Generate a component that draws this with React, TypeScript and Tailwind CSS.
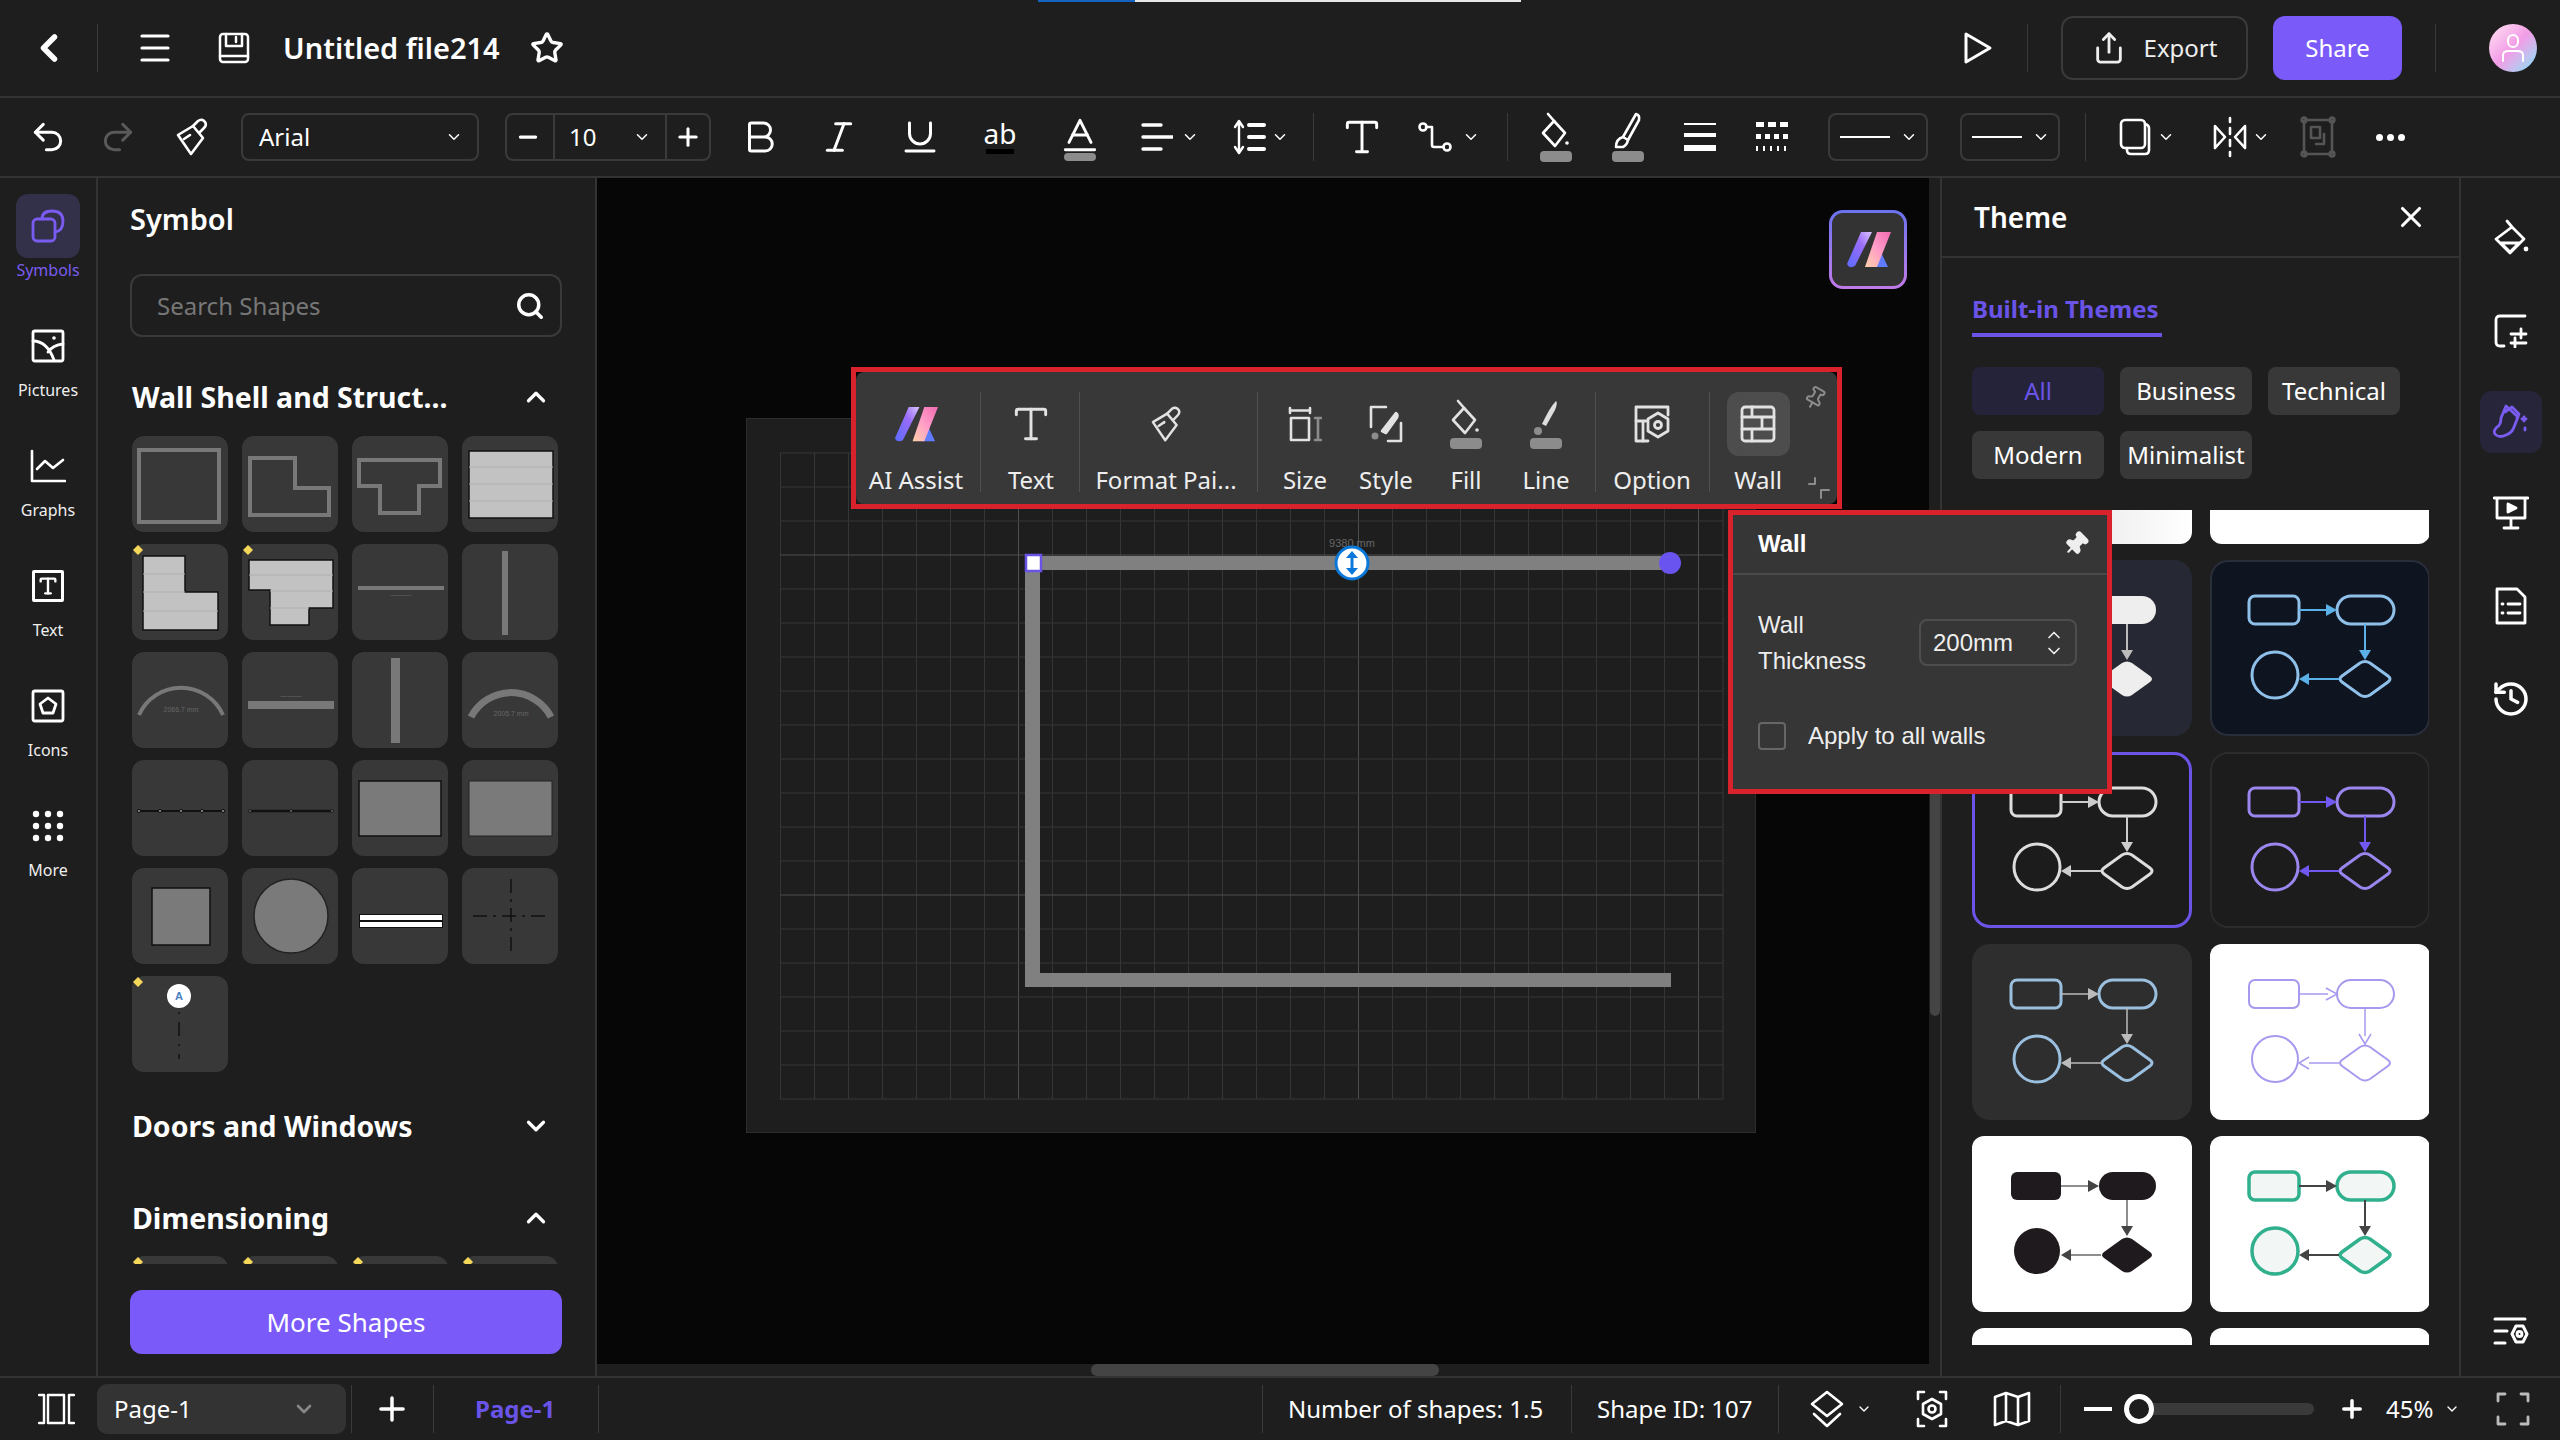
import React from 'react';
import {
  Baseline,
  Bold,
  ChevronDown,
  ChevronLeft,
  ChevronUp,
  History,
  Italic,
  Minus,
  Pin,
  Plus,
  Redo2,
  Search,
  Share,
  Star,
  Type,
  Underline,
  Undo2,
  X,
} from 'lucide-react';

type SvgProps = { w: number; h: number; sw?: number; children: React.ReactNode };

const Svg = ({ w, h, sw = 2.5, children }: SvgProps) => (
  <svg
    width={w}
    height={h}
    viewBox={`0 0 ${w} ${h}`}
    fill="none"
    stroke="currentColor"
    strokeWidth={sw}
    strokeLinecap="round"
    strokeLinejoin="round"
  >
    {children}
  </svg>
);

const Chev = ({ size = 18 }: { size?: number }) => <ChevronDown size={size} strokeWidth={2} />;

const Divider = ({ className = '' }: { className?: string }) => (
  <div className={`w-[1px] h-12 bg-[#3a3a3a] shrink-0 ${className}`} />
);

const AiLogo = ({ w }: { w: number }) => (
  <svg width={w} height={(w * 37) / 45} viewBox="0 0 45 37">
    <defs>
      <linearGradient id="aiA" x1="0" y1="1" x2="1" y2="0">
        <stop offset="0" stopColor="#5a6cff" />
        <stop offset="0.6" stopColor="#9a6cf8" />
        <stop offset="1" stopColor="#d9c4ff" />
      </linearGradient>
      <linearGradient id="aiB" x1="0" y1="1" x2="1" y2="0">
        <stop offset="0" stopColor="#ffd2a8" />
        <stop offset="0.5" stopColor="#ff9cc8" />
        <stop offset="1" stopColor="#f06ab0" />
      </linearGradient>
    </defs>
    <path d="M15 1 H26 L9 35 Q3 38 1 33 Z" fill="url(#aiA)" />
    <path d="M33 17 L42 36 H28 Z" fill="#5f7cff" />
    <path d="M31 1 H45 L31 36 H19 Z" fill="url(#aiB)" />
  </svg>
);

const BrushIcon = ({ s = 1 }: { s?: number }) => (
  <svg width={32 * s} height={38 * s} viewBox="0 0 32 38" fill="none" stroke="currentColor" strokeWidth={2.6} strokeLinejoin="round" strokeLinecap="round">
    <path d="M2 17 L17 8 L27 20 L15 36 Z" />
    <path d="M17 8 L22 3 Q26 0 29 4 Q31 7 28 10 L24 14" />
    <path d="M8 21 L14 17" />
  </svg>
);

const FillIcon = () => (
  <svg width={36} height={50} viewBox="0 0 36 50" fill="none" stroke="currentColor" strokeWidth={2.6} strokeLinejoin="round" strokeLinecap="round">
    <path d="M16 9 L27 21 L17 34 L5 21 Z" />
    <path d="M10 2 L17 10" />
    <circle cx="29" cy="31" r="1.8" fill="currentColor" stroke="none" />
    <rect x="2" y="39" width="32" height="11" rx="4" fill="#8c8c8c" stroke="none" />
  </svg>
);

const PenIcon = () => (
  <svg width={36} height={50} viewBox="0 0 36 50" fill="none" stroke="currentColor" strokeWidth={2.6} strokeLinejoin="round" strokeLinecap="round">
    <path d="M26 2 Q30 3 29 8 L18 28 L13 25 Z" />
    <path d="M13 25 Q6 27 6 35 H13 Q17 33 18 28" />
    <rect x="2" y="39" width="32" height="11" rx="4" fill="#8c8c8c" stroke="none" />
  </svg>
);

const TopBar = () => (
  <header className="h-[98px] shrink-0 flex items-center border-b-2 border-[#333333] relative">
    <div className="absolute left-[1038px] top-0 w-[97px] h-[2px] bg-[#1565c0]" />
    <div className="absolute left-[1135px] top-0 w-[386px] h-[2px] bg-[#e8e8e8]" />
    <div className="w-[97px] flex justify-center shrink-0">
      <ChevronLeft size={44} strokeWidth={3} />
    </div>
    <Divider />
    <div className="ml-[42px]">
      <Svg w={30} h={30} sw={3.2}>
        <path d="M2 3 H28 M2 15 H28 M2 27 H28" />
      </Svg>
    </div>
    <div className="ml-[48px]">
      <Svg w={32} h={32}>
        <rect x="2" y="2" width="28" height="28" rx="3" />
        <path d="M8 2 V14 H24 V2 M2 24 H30" />
        <path d="M18 5 V10" />
      </Svg>
    </div>
    <span className="ml-[33px] text-[29px] font-semibold w-[230px] whitespace-nowrap">Untitled file214</span>
    <Star size={34} strokeWidth={2.4} className="ml-[17px]" />
    <div className="flex-1" />
    <svg width="30" height="34" viewBox="0 0 30 34" fill="none" stroke="currentColor" strokeWidth="3" strokeLinejoin="round">
      <path d="M3 3 L27 17 L3 31 Z" />
    </svg>
    <Divider className="ml-[34px]" />
    <button className="ml-[33px] w-[187px] h-16 rounded-xl border-2 border-[#3a3a3a] flex items-center justify-center gap-[18px] text-2xl text-[#eeeeee]">
      <Share size={34} strokeWidth={2} />
      Export
    </button>
    <button className="ml-[25px] w-[129px] h-16 rounded-xl bg-[#7a5af8] text-2xl text-white">Share</button>
    <Divider className="ml-[33px]" />
    <div className="ml-[53px] mr-[23px] w-12 h-12 rounded-full bg-gradient-to-br from-[#ffe4f2] via-[#f19ce6] to-[#62e4f8] flex items-center justify-center">
      <Svg w={24} h={28} sw={2}>
        <rect x="7" y="1" width="10" height="12" rx="5" stroke="#ffffff" />
        <path d="M2 27 V21 Q2 17 8 17 H16 Q22 17 22 21 V27" stroke="#ffffff" />
      </Svg>
    </div>
  </header>
);

const ToolBar = () => (
  <div className="h-[80px] shrink-0 flex items-center border-b-2 border-[#333333]">
    <div className="ml-[24px] w-12 flex justify-center"><Undo2 size={38} strokeWidth={1.9} /></div>
    <div className="ml-[22px] w-12 flex justify-center text-[#5a5a5a]"><Redo2 size={38} strokeWidth={1.9} /></div>
    <div className="ml-[26px] w-12 flex justify-center"><BrushIcon /></div>
    <div className="ml-[25px] w-[238px] h-12 rounded-lg border-2 border-[#3a3a3a] flex items-center justify-between pl-4 pr-[14px] text-2xl">
      <span>Arial</span>
      <Chev />
    </div>
    <div className="ml-[26px] w-[206px] h-12 rounded-lg border-2 border-[#3a3a3a] flex items-center text-2xl">
      <div className="w-[46px] pr-1 flex justify-center"><Minus size={26} strokeWidth={3} /></div>
      <div className="w-[114px] h-full border-x-2 border-[#3a3a3a] flex items-center justify-between pl-[14px] pr-[14px]">
        <span>10</span>
        <Chev />
      </div>
      <div className="flex-1 flex justify-center"><Plus size={28} strokeWidth={2.6} /></div>
    </div>
    <div className="ml-[25px] w-12 flex justify-center"><Bold size={42} strokeWidth={1.7} /></div>
    <div className="ml-[31px] w-12 flex justify-center"><Italic size={40} strokeWidth={1.8} /></div>
    <div className="ml-[33px] w-12 flex justify-center"><Underline size={42} strokeWidth={1.7} /></div>
    <div className="ml-[32px] w-12 flex flex-col items-center">
      <span className="text-[28px] leading-[26px]">ab</span>
      <div className="w-7 h-[5px] bg-black mt-[3px]" />
    </div>
    <div className="ml-[32px] w-12 flex flex-col items-center">
      <Baseline size={44} strokeWidth={1.6} />
      <div className="w-8 h-[8px] rounded bg-[#8c8c8c] -mt-[4px]" />
    </div>
    <div className="ml-[29px] w-[72px] flex items-center gap-[8px] pl-[8px]">
      <Svg w={32} h={32} sw={3.4}>
        <path d="M2 4 H20 M2 16 H32 M2 28 H20" />
      </Svg>
      <Chev />
    </div>
    <div className="ml-[20px] w-[72px] flex items-center gap-[4px] pl-[8px]">
      <Svg w={34} h={38} sw={2.4}>
        <path d="M6 4 V34 M2 9 L6 3 L10 9 M2 29 L6 35 L10 29" />
        <rect x="14" y="5" width="19" height="4" rx="2" fill="currentColor" stroke="none" />
        <rect x="14" y="17" width="19" height="4" rx="2" fill="currentColor" stroke="none" />
        <rect x="14" y="29" width="19" height="4" rx="2" fill="currentColor" stroke="none" />
      </Svg>
      <Chev />
    </div>
    <Divider className="ml-[16px]" />
    <div className="ml-[24px] w-12 flex justify-center"><Type size={44} strokeWidth={1.6} /></div>
    <div className="ml-[24px] w-[76px] flex items-center gap-[10px] pl-[8px]">
      <Svg w={34} h={30} sw={2.6}>
        <circle cx="5" cy="5" r="3.5" />
        <circle cx="29" cy="25" r="3.5" />
        <path d="M8 5 H14 V23 Q14 25 16 25 H25" />
      </Svg>
      <Chev />
    </div>
    <Divider className="ml-[21px]" />
    <div className="ml-[24px] w-12 flex justify-center"><FillIcon /></div>
    <div className="ml-[24px] w-12 flex justify-center"><PenIcon /></div>
    <div className="ml-[24px] w-12 flex flex-col items-center">
      <div className="w-8 h-[2px] bg-white" />
      <div className="w-8 h-[4px] bg-white mt-[8px]" />
      <div className="w-8 h-[6px] bg-white mt-[8px]" />
    </div>
    <div className="ml-[24px] w-12 flex justify-center">
      <svg width="32" height="30" viewBox="0 0 32 30" fill="#ffffff">
        <rect x="0" y="0" width="8" height="5" />
        <rect x="12" y="0" width="8" height="5" />
        <rect x="24" y="0" width="8" height="5" />
        <rect x="0" y="12" width="5" height="5" />
        <rect x="9" y="12" width="5" height="5" />
        <rect x="18" y="12" width="5" height="5" />
        <rect x="27" y="12" width="5" height="5" />
        <rect x="0" y="24" width="2" height="5" />
        <rect x="7" y="24" width="2" height="5" />
        <rect x="14" y="24" width="2" height="5" />
        <rect x="21" y="24" width="2" height="5" />
        <rect x="28" y="24" width="2" height="5" />
      </svg>
    </div>
    <div className="ml-[32px] w-[100px] h-12 rounded-lg border-2 border-[#3a3a3a] flex items-center justify-between pl-[10px] pr-[8px]">
      <div className="w-[50px] h-[2px] bg-white" />
      <Chev />
    </div>
    <div className="ml-[32px] w-[100px] h-12 rounded-lg border-2 border-[#3a3a3a] flex items-center justify-between pl-[10px] pr-[8px]">
      <div className="w-[50px] h-[2px] bg-white" />
      <Chev />
    </div>
    <Divider className="ml-[25px]" />
    <div className="ml-[25px] w-[67px] flex items-center gap-[6px] pl-[8px]">
      <Svg w={32} h={38} sw={2.6}>
        <rect x="2" y="2" width="24" height="28" rx="4" />
        <path d="M8 30 V32 Q8 36 12 36 H26 Q30 36 30 32 V10 Q30 7 26 6" />
      </Svg>
      <Chev />
    </div>
    <div className="ml-[28px] w-[68px] flex items-center gap-[4px] pl-[6px]">
      <Svg w={36} h={42} sw={2.6}>
        <path d="M18 2 V6 M18 12 V18 M18 24 V30 M18 36 V40" />
        <path d="M3 10 L13 21 L3 32 Z" />
        <path d="M33 10 L23 21 L33 32 Z" />
      </Svg>
      <Chev />
    </div>
    <div className="ml-[20px] w-12 flex justify-center text-[#555555]">
      <Svg w={36} h={42} sw={2.6}>
        <rect x="4" y="4" width="28" height="34" rx="2" />
        <circle cx="4" cy="4" r="2.4" />
        <circle cx="32" cy="4" r="2.4" />
        <circle cx="4" cy="38" r="2.4" />
        <circle cx="32" cy="38" r="2.4" />
        <rect x="11" y="11" width="9" height="11" />
        <path d="M24 18 V28 H16" />
      </Svg>
    </div>
    <div className="ml-[24px] w-12 flex justify-center gap-[4px]">
      <div className="w-[7px] h-[7px] rounded-full bg-white" />
      <div className="w-[7px] h-[7px] rounded-full bg-white" />
      <div className="w-[7px] h-[7px] rounded-full bg-white" />
    </div>
  </div>
);

const RailItem = ({ label, active, children }: { label: string; active?: boolean; children: React.ReactNode }) => (
  <div className="h-[120px] flex flex-col items-center">
    <div className={`w-16 h-16 rounded-xl flex items-center justify-center ${active ? 'bg-[#33304a] text-[#7a5cf0]' : 'text-white'}`}>
      {children}
    </div>
    <span className={`text-base leading-6 ${active ? 'text-[#7a5cf0]' : 'text-[#eeeeee]'}`}>{label}</span>
  </div>
);

const LeftRail = () => (
  <aside className="w-[98px] shrink-0 border-r-2 border-[#333333] pt-4">
    <RailItem label="Symbols" active>
      <Svg w={34} h={34} sw={2.8}>
        <rect x="2" y="10" width="22" height="22" rx="4" />
        <path d="M11 10 Q11 2 21 2 Q32 2 32 12 Q32 22 24 23" />
      </Svg>
    </RailItem>
    <RailItem label="Pictures">
      <Svg w={34} h={34} sw={2.8}>
        <rect x="2" y="2" width="30" height="30" rx="2" />
        <path d="M2 12 Q16 12 23 31 M17 23 Q22 16 32 15" />
        <circle cx="23" cy="9" r="1.8" fill="currentColor" stroke="none" />
      </Svg>
    </RailItem>
    <RailItem label="Graphs">
      <Svg w={36} h={34} sw={2.6}>
        <path d="M2 2 V32 H35" />
        <path d="M7 20 L15 12 L23 19 L33 11" />
      </Svg>
    </RailItem>
    <RailItem label="Text">
      <div className="w-8 h-8 rounded-[2px] border-[3px] border-white flex items-center justify-center">
        <Type size={22} strokeWidth={2.6} />
      </div>
    </RailItem>
    <RailItem label="Icons">
      <Svg w={34} h={34} sw={2.8}>
        <rect x="2" y="2" width="30" height="30" rx="2" />
        <path d="M17 9 L25 15 L22 24 H12 L9 15 Z" />
      </Svg>
    </RailItem>
    <RailItem label="More">
      <svg width="32" height="32" viewBox="0 0 32 32" fill="#ffffff">
        {[4, 16, 28].map((y) =>
          [4, 16, 28].map((x) => <circle key={`${x}-${y}`} cx={x} cy={y} r="3.2" />),
        )}
      </svg>
    </RailItem>
  </aside>
);

const Dot = () => <path d="M6 1 L11 6 L6 11 L1 6 Z" fill="#f6d858" stroke="none" />;

const Tiny = ({ x, y, t }: { x: number; y: number; t: string }) => (
  <text x={x} y={y} fontSize="7" fill="#666666" textAnchor="middle" fontFamily="Liberation Sans">{t}</text>
);

const tiles: React.ReactNode[] = [
  <rect x="7" y="14" width="80" height="72" fill="none" stroke="#787878" strokeWidth="4" />,
  <path d="M8 22 H53 V52 H87 V79 H8 Z" fill="none" stroke="#787878" strokeWidth="4" />,
  <path d="M7 24 H88 V50 H67 V77 H28 V50 H7 Z" fill="none" stroke="#787878" strokeWidth="4" />,
  <g>
    <rect x="7" y="15" width="84" height="67" fill="#c2c2c2" stroke="#111111" strokeWidth="1.5" />
    <path d="M7 31 H91 M7 48 H91 M7 65 H91" stroke="#b0b0b0" />
  </g>,
  <g>
    <path d="M11 12 H53 V48 H86 V86 H11 Z" fill="#c2c2c2" stroke="#111111" strokeWidth="1.5" />
    <path d="M11 30 H53 M11 48 H53 M11 67 H86" stroke="#b0b0b0" />
    <Dot />
  </g>,
  <g>
    <path d="M7 16 H91 V64 H67 V81 H28 V46 H7 Z" fill="#c2c2c2" stroke="#111111" strokeWidth="1.5" />
    <path d="M7 31 H91 M28 47 H91 M28 64 H67" stroke="#b0b0b0" />
    <Dot />
  </g>,
  <g>
    <rect x="6" y="42" width="86" height="4" fill="#787878" />
    <Tiny x={49} y={53} t="———" />
  </g>,
  <g>
    <rect x="40" y="7" width="6" height="84" fill="#787878" />
  </g>,
  <g>
    <path d="M7 63 A46 46 0 0 1 91 63" fill="none" stroke="#787878" strokeWidth="4" />
    <Tiny x={49} y={60} t="2066.7 mm" />
  </g>,
  <g>
    <rect x="6" y="49" width="86" height="8" fill="#787878" />
    <Tiny x={49} y={46} t="———" />
  </g>,
  <g>
    <rect x="39" y="6" width="9" height="85" fill="#787878" />
  </g>,
  <g>
    <path d="M9 65 A45 45 0 0 1 89 65" fill="none" stroke="#787878" strokeWidth="7" />
    <Tiny x={49} y={64} t="2005.7 mm" />
  </g>,
  <g>
    <path d="M6 51 H92" stroke="#111111" strokeWidth="2" />
    {[7, 28, 49, 70, 91].map((x) => (
      <circle key={x} cx={x} cy="51" r="1.6" fill="#888888" stroke="#111111" />
    ))}
  </g>,
  <g>
    <path d="M7 51 H91" stroke="#111111" strokeWidth="2.5" />
    {[8, 49, 90].map((x) => (
      <circle key={x} cx={x} cy="51" r="1.4" fill="#888888" stroke="#111111" />
    ))}
  </g>,
  <rect x="7" y="21" width="82" height="55" fill="#7a7a7a" stroke="#111111" strokeWidth="1.5" />,
  <rect x="7" y="21" width="83" height="55" fill="#7a7a7a" stroke="#222222" strokeWidth="1" />,
  <rect x="20" y="20" width="58" height="57" fill="#7a7a7a" stroke="#111111" strokeWidth="1.5" />,
  <circle cx="49" cy="48" r="37" fill="#7a7a7a" stroke="#222222" strokeWidth="1.5" />,
  <g>
    <rect x="7" y="46" width="84" height="14" fill="#111111" />
    <rect x="8" y="47" width="82" height="5" fill="#ffffff" />
    <rect x="8" y="54" width="82" height="5" fill="#ffffff" />
  </g>,
  <g stroke="#111111" strokeWidth="1.5">
    <path d="M49 11 V85" strokeDasharray="14 6 3 6" />
    <path d="M11 48 H88" strokeDasharray="14 6 3 6" />
  </g>,
  <g>
    <circle cx="47" cy="20" r="12" fill="#ffffff" />
    <text x="47" y="24" fontSize="11" fill="#4a7fc0" textAnchor="middle" fontFamily="Liberation Sans" fontWeight="700">A</text>
    <path d="M47 36 V83" stroke="#111111" strokeWidth="1.5" strokeDasharray="2 8 14 8" />
    <Dot />
  </g>,
];

const Tile = ({ children }: { children?: React.ReactNode }) => (
  <div className="w-24 h-24 rounded-xl bg-[#383838]">
    <svg width="96" height="96" viewBox="0 0 96 96">{children}</svg>
  </div>
);

const SectionHead = ({ title, open, className }: { title: string; open: boolean; className: string }) => (
  <div className={`h-[60px] flex items-center justify-between pr-[12px] pl-[2px] ${className}`}>
    <span className="text-[28.5px] font-bold whitespace-nowrap">{title}</span>
    {open ? <ChevronUp size={30} strokeWidth={2.6} /> : <ChevronDown size={30} strokeWidth={2.6} />}
  </div>
);

const SymbolPanel = () => (
  <aside className="w-[499px] shrink-0 border-r-2 border-[#333333] px-[32px] flex flex-col">
    <div className="h-[82px] flex items-center text-[29px] font-semibold">Symbol</div>
    <div className="mt-[14px] h-[63px] w-[432px] rounded-xl border-2 border-[#3a3a3a] flex items-center justify-between pl-[25px] pr-[15px]">
      <span className="text-2xl text-[#777777]">Search Shapes</span>
      <Search size={30} strokeWidth={2.8} />
    </div>
    <div className="mt-[30px] h-[897px] overflow-hidden">
      <SectionHead title="Wall Shell and Struct..." open className="" />
      <div className="mt-[9px] pl-[2px] grid grid-cols-[96px_96px_96px_96px] gap-x-[14px] gap-y-3">
        {tiles.map((t, i) => (
          <Tile key={i}>{t}</Tile>
        ))}
      </div>
      <SectionHead title="Doors and Windows" open={false} className="mt-6" />
      <SectionHead title="Dimensioning" open className="mt-8" />
      <div className="mt-2 pl-[2px] grid grid-cols-[96px_96px_96px_96px] gap-x-[14px]">
        {[0, 1, 2, 3].map((i) => (
          <Tile key={i}>
            <Dot />
          </Tile>
        ))}
      </div>
    </div>
    <button className="mt-[26px] w-[432px] h-16 rounded-xl bg-[#7a5af8] text-[26px] text-white">More Shapes</button>
  </aside>
);

const Canvas = () => {
  const xs = Array.from({ length: 28 }, (_, i) => i);
  const ys = Array.from({ length: 20 }, (_, i) => i);
  return (
    <section className="w-[1343px] shrink-0 flex flex-col">
      <div className="flex-1 flex min-h-0">
        <div className="w-[1333px] bg-[#060606] relative">
          <div className="absolute left-[149px] top-[240px] w-[1010px] h-[715px] bg-[#1e1e1e] border border-[#2c2c2c]">
            <svg width="1010" height="715" viewBox="0 0 1010 715">
              {xs.map((i) => (
                <path key={i} d={`M${33.5 + i * 34} 34 V680`} stroke={i % 10 === 7 ? '#4e4e4e' : '#363636'} />
              ))}
              {ys.map((i) => (
                <path key={i} d={`M33 ${34 + i * 34} H976`} stroke={i % 10 === 3 ? '#4e4e4e' : '#363636'} />
              ))}
              <path d="M976 34 V680" stroke="#363636" />
              <path d="M278 137 H924 V151 H293 V554 H924 V568 H278 Z" fill="#808080" />
              <text x="605" y="128" fontSize="11" fill="#666666" textAnchor="middle" fontFamily="Liberation Sans">9380 mm</text>
              <rect x="279" y="136" width="15" height="16" fill="#ffffff" stroke="#6a54e8" strokeWidth="2.5" />
              <circle cx="923" cy="144" r="11" fill="#6a54f0" />
              <circle cx="605" cy="144" r="16" fill="#ffffff" stroke="#0a78d8" strokeWidth="3" />
              <path d="M605 134 V154" stroke="#0a78d8" strokeWidth="3" />
              <path d="M599 139 L605 132 L611 139 Z M599 149 L605 156 L611 149 Z" fill="#0a78d8" />
            </svg>
          </div>
          <div className="absolute left-[1232px] top-[32px] w-[78px] h-[79px] rounded-[14px] p-[3px] bg-gradient-to-b from-[#6a72f0] to-[#c07ae8]">
            <div className="w-full h-full rounded-[11px] bg-[#333333] flex items-center justify-center">
              <AiLogo w={45} />
            </div>
          </div>
        </div>
        <div className="w-[10px] ml-[1px]">
          <div className="mt-[450px] h-[388px] rounded-b-md bg-[#444444]" />
        </div>
      </div>
      <div className="h-[12px] shrink-0">
        <div className="ml-[494px] w-[348px] h-[12px] rounded-l-md rounded-r-md bg-[#444444]" />
      </div>
    </section>
  );
};

type FlowProps = {
  stroke: string;
  arrow?: string;
  fill?: string;
  sw?: number;
  thin?: number;
  open?: boolean;
};

const Flow = ({ stroke, arrow = stroke, fill = 'none', sw = 3, thin = 2, open }: FlowProps) => {
  const head = (d: string) =>
    open ? (
      <path d={d} fill="none" stroke={arrow} strokeWidth={thin} />
    ) : (
      <path d={`${d} Z`} fill={arrow} stroke="none" />
    );
  return (
    <svg width="220" height="176" viewBox="0 0 220 176">
      <rect x="39" y="36" width="50" height="28" rx="6" fill={fill} stroke={stroke} strokeWidth={sw} />
      <rect x="127" y="36" width="57" height="28" rx="14" fill={fill} stroke={stroke} strokeWidth={sw} />
      <path d="M89 50 H118" stroke={arrow} strokeWidth={thin} />
      {head('M116 44 L127 50 L116 56')}
      <path d="M155 64 V92" stroke={arrow} strokeWidth={thin} />
      {head('M149 90 L155 100 L161 90')}
      <path
        d="M150 103 Q155 100 160 103 L178 116 Q182 119 178 122 L160 135 Q155 138 150 135 L132 122 Q128 119 132 116 Z"
        fill={fill}
        stroke={stroke}
        strokeWidth={sw}
      />
      <path d="M129 119 H99" stroke={arrow} strokeWidth={thin} />
      {head('M99 113 L89 119 L99 125')}
      <circle cx="65" cy="115" r="23" fill={fill} stroke={stroke} strokeWidth={sw} />
    </svg>
  );
};

const ThemePanel = () => (
  <aside className="w-[521px] shrink-0 border-r-2 border-l-2 border-[#333333] flex flex-col">
    <div className="h-[80px] shrink-0 border-b-2 border-[#333333] flex items-center justify-between pl-[32px] pr-[31px]">
      <span className="text-[28px] font-semibold">Theme</span>
      <X size={34} strokeWidth={2.2} />
    </div>
    <div className="px-[30px]">
      <div className="mt-[34px] w-[190px] border-b-4 border-[#6a54e8] pb-[7px] text-2xl leading-[34px] font-bold text-[#6a54e8] whitespace-nowrap">
        Built-in Themes
      </div>
      <div className="mt-[30px] grid grid-cols-[132px_132px_132px] gap-x-4 gap-y-4 text-2xl">
        <div className="h-12 rounded-lg bg-[#24233a] text-[#6a54e8] flex items-center justify-center">All</div>
        <div className="h-12 rounded-lg bg-[#383838] flex items-center justify-center">Business</div>
        <div className="h-12 rounded-lg bg-[#383838] flex items-center justify-center">Technical</div>
        <div className="h-12 rounded-lg bg-[#383838] flex items-center justify-center">Modern</div>
        <div className="h-12 rounded-lg bg-[#383838] flex items-center justify-center">Minimalist</div>
      </div>
      <div className="mt-[31px] h-[835px] overflow-hidden">
        <div className="-mt-[142px] grid grid-cols-[220px_220px] gap-x-[18px] gap-y-4">
          <div className="h-[176px] rounded-xl bg-gradient-to-r from-[#d8d8d8] to-white" />
          <div className="h-[176px] rounded-xl bg-white" />
          <div className="h-[176px] rounded-[18px] bg-[#262833]">
            <Flow stroke="#eeeeee" fill="#eeeeee" arrow="#bbbbbb" sw={0} />
          </div>
          <div className="h-[176px] rounded-[18px] bg-[#0e1420] ring-2 ring-inset ring-[#2a2e38]">
            <Flow stroke="#8fc0ea" arrow="#5cb0e8" />
          </div>
          <div className="h-[176px] rounded-[18px] bg-[#1c1c1c] ring-[3px] ring-inset ring-[#6c54e8]">
            <Flow stroke="#dddddd" arrow="#cccccc" />
          </div>
          <div className="h-[176px] rounded-[18px] bg-[#1c1c1c] ring-2 ring-inset ring-[#2c2c2c]">
            <Flow stroke="#9a86ee" arrow="#7058f0" />
          </div>
          <div className="h-[176px] rounded-[18px] bg-[#2e2e2e]">
            <Flow stroke="#9bbfde" arrow="#bbbbbb" thin={1.5} />
          </div>
          <div className="h-[176px] rounded-xl bg-white">
            <Flow stroke="#a898ee" thin={1.5} sw={2} open />
          </div>
          <div className="h-[176px] rounded-xl bg-white">
            <Flow stroke="#1f1a1e" fill="#1f1a1e" arrow="#444444" sw={0} thin={1.2} />
          </div>
          <div className="h-[176px] rounded-xl bg-white">
            <Flow stroke="#30b08c" fill="#f2f7f5" arrow="#444444" sw={3.5} />
          </div>
          <div className="h-[176px] rounded-xl bg-white" />
          <div className="h-[176px] rounded-xl bg-white" />
        </div>
      </div>
    </div>
  </aside>
);

const RightRail = () => (
  <aside className="flex-1 flex flex-col items-center pt-[30px] text-white">
    <div className="h-[62px] flex items-center">
      <Svg w={36} h={40} sw={2.8}>
        <path d="M14 2 L19 8 L31 20 L17 34 L3 20 L19 8" />
        <path d="M8 24 H26 L17 33 Z" fill="none" />
        <circle cx="33" cy="30" r="2.4" fill="currentColor" stroke="none" />
      </Svg>
    </div>
    <div className="mt-[30px] h-[62px] flex items-center">
      <Svg w={34} h={34} sw={2.8}>
        <path d="M31 2 H6 Q2 2 2 6 V28 Q2 32 6 32 H10" />
        <path d="M17 20 H32 M17 29 H32 M27 15 V24 M21 24 V33" />
      </Svg>
    </div>
    <div className="mt-[29px] w-[62px] h-[62px] rounded-xl bg-[#27253a] text-[#7a5cf0] flex items-center justify-center">
      <Svg w={38} h={38} sw={2.8}>
        <path d="M14 3 L26 14 L22 24 Q20 30 14 32 Q8 35 4 32 Q0 29 5 24 Q9 22 9 15 Z" />
        <path d="M13 9 L20 4 L27 11 L25 15" />
        <path d="M32 14 V18 M30 16 H34 M33 25 V27" />
      </Svg>
    </div>
    <div className="mt-[29px] h-[62px] flex items-center">
      <Svg w={36} h={34} sw={2.8}>
        <path d="M1 2 H35 M4 2 V22 H32 V2 M18 22 V32 M11 32 H25" />
        <path d="M15 8 L23 12 L15 16 Z" fill="currentColor" />
      </Svg>
    </div>
    <div className="mt-[31px] h-[62px] flex items-center">
      <Svg w={34} h={38} sw={2.8}>
        <path d="M3 2 H23 L31 10 V36 H3 Z" />
        <path d="M14 17 H26 M14 26 H26 M8 17 H9 M8 26 H9" />
      </Svg>
    </div>
    <div className="mt-[31px] h-[62px] flex items-center">
      <History size={40} strokeWidth={2.1} />
    </div>
    <div className="flex-1" />
    <div className="mb-[30px]">
      <Svg w={36} h={30} sw={3}>
        <path d="M2 3 H32 M2 15 H14 M2 27 H12" />
        <path d="M23 10 H30 L34 18 L30 26 H23 L19 18 Z" />
        <circle cx="26.5" cy="18" r="2.4" />
      </Svg>
    </div>
  </aside>
);

const BottomBar = () => (
  <footer className="h-16 shrink-0 border-t-2 border-[#333333] flex items-center text-2xl">
    <div className="ml-[38px]">
      <Svg w={37} h={32} sw={2.4}>
        <path d="M1 2 H6 V30 H1 M10 2 H26 V30 H10 Z M36 2 H31 V30 H36" />
      </Svg>
    </div>
    <div className="ml-[22px] w-[249px] h-[50px] rounded-[10px] bg-[#333333] flex items-center justify-between pl-[17px] pr-[30px]">
      <span>Page-1</span>
      <span className="text-[#888888]"><ChevronDown size={24} strokeWidth={2.6} /></span>
    </div>
    <Divider className="ml-[5px]" />
    <div className="ml-[16px] w-12 flex justify-center"><Plus size={38} strokeWidth={2.2} /></div>
    <Divider className="ml-[17px]" />
    <span className="ml-[41px] font-bold text-[#6a54e8] w-[84px] whitespace-nowrap">Page-1</span>
    <Divider className="ml-[39px]" />
    <div className="flex-1" />
    <Divider />
    <span className="ml-[25px] w-[258px] whitespace-nowrap">Number of shapes: 1.5</span>
    <Divider className="ml-[25px]" />
    <span className="ml-[25px] w-[156px] whitespace-nowrap">Shape ID: 107</span>
    <Divider className="ml-[25px]" />
    <div className="ml-[28px] w-10 flex justify-center">
      <Svg w={34} h={38} sw={2.6}>
        <path d="M17 2 L32 14 L17 26 L2 14 Z" />
        <path d="M4 24 L17 36 L30 24" />
      </Svg>
    </div>
    <div className="ml-[9px] w-4 flex justify-center"><Chev /></div>
    <div className="ml-[40px] w-10 flex justify-center">
      <Svg w={32} h={38} sw={2.6}>
        <path d="M8 2 H2 V9 M24 2 H30 V9 M8 36 H2 V29 M24 36 H30 V29" />
        <path d="M16 9 L25 14 V24 L16 29 L7 24 V14 Z" fill="none" />
        <circle cx="16" cy="19" r="3.5" />
      </Svg>
    </div>
    <div className="ml-[40px] w-10 flex justify-center">
      <Svg w={38} h={36} sw={2.6}>
        <path d="M2 6 L13 2 L25 6 L36 2 V30 L25 34 L13 30 L2 34 Z M13 2 V30 M25 6 V34" />
      </Svg>
    </div>
    <Divider className="ml-[28px]" />
    <div className="ml-[23px] w-7 h-[4px] bg-white" />
    <div className="ml-[10px] w-[192px] h-[12px] relative">
      <div className="ml-[18px] h-[12px] rounded-full bg-[#3a3a3a]" />
      <div className="absolute left-[2px] -top-[9px] w-[30px] h-[30px] rounded-full border-[5px] border-white bg-[#1e1e1e]" />
    </div>
    <div className="ml-[24px] w-7 flex justify-center"><Plus size={32} strokeWidth={3} /></div>
    <span className="ml-[20px] w-12 whitespace-nowrap">45%</span>
    <div className="ml-[10px] w-4 flex justify-center"><Chev /></div>
    <div className="ml-[33px] mr-[27px] w-10 flex justify-center text-[#bbbbbb]">
      <Svg w={34} h={34} sw={2.8}>
        <path d="M9 2 H2 V9 M25 2 H32 V9 M9 32 H2 V25 M25 32 H32 V25" />
      </Svg>
    </div>
  </footer>
);

const WallToolItem = ({ label, w, className = '', active, children }: { label: string; w: string; className?: string; active?: boolean; children: React.ReactNode }) => (
  <div className={`flex flex-col items-center shrink-0 ${w} ${className}`}>
    <div className={`w-[63px] h-16 rounded-xl flex items-center justify-center ${active ? 'bg-[#4d4d4d]' : ''}`}>{children}</div>
    <span className="mt-2 text-2xl leading-8 text-[#eeeeee] whitespace-nowrap">{label}</span>
  </div>
);

const WallToolbar = () => (
  <div className="absolute left-[851px] top-[367px] w-[991px] h-[142px] border-[5px] border-[#d8222c]">
    <div className="h-full bg-[#383838] rounded-lg flex pt-5 relative text-[#e2e2e2] font-['Noto_Sans',sans-serif]">
      <WallToolItem label="AI Assist" w="w-[112px]" className="ml-[4px]"><AiLogo w={44} /></WallToolItem>
      <div className="ml-2 w-[1px] h-[100px] bg-[#505050]" />
      <WallToolItem label="Text" w="w-[96px]" className="ml-[2px]"><Type size={44} strokeWidth={1.6} /></WallToolItem>
      <div className="w-[1px] h-[100px] bg-[#505050]" />
      <WallToolItem label="Format Pai..." w="w-[172px]"><BrushIcon s={0.95} /></WallToolItem>
      <div className="ml-[5px] w-[1px] h-[100px] bg-[#505050]" />
      <WallToolItem label="Size" w="w-[80px]" className="ml-[7px]">
        <Svg w={34} h={36} sw={2.6}>
          <path d="M2 2 V7 M22 2 V7 M2 4.5 H22" />
          <rect x="3" y="12" width="18" height="22" />
          <path d="M30 12 V34 M27 12 H33 M27 34 H33" stroke="#8c8c8c" />
        </Svg>
      </WallToolItem>
      <WallToolItem label="Style" w="w-[80px]" className="ml-[1px]">
        <Svg w={36} h={38} sw={2.6}>
          <path d="M18 2 H3 V22 M33 18 V36 H20" />
          <path d="M28 8 Q31 10 28 14 L18 28 L14 26 Z" fill="currentColor" />
          <circle cx="7" cy="31" r="3.5" fill="#8c8c8c" stroke="none" />
        </Svg>
      </WallToolItem>
      <WallToolItem label="Fill" w="w-[80px]"><FillIcon /></WallToolItem>
      <WallToolItem label="Line" w="w-[80px]">
        <svg width={36} height={50} viewBox="0 0 36 50" fill="#dddddd">
          <path d="M28 2 Q30 4 27 11 L18 27 L14 25 Q22 8 28 2 Z" />
          <circle cx="10" cy="32" r="4" fill="#8c8c8c" />
          <rect x="2" y="39" width="32" height="11" rx="4" fill="#8c8c8c" />
        </svg>
      </WallToolItem>
      <div className="ml-[9px] w-[1px] h-[100px] bg-[#505050]" />
      <WallToolItem label="Option" w="w-[100px]" className="ml-[6px]">
        <Svg w={36} h={38} sw={2.8}>
          <path d="M34 10 V2 H2 V36 H14" />
          <path d="M2 16 H12 M9 16 V36" />
          <path d="M24 8 L34 14 V26 L24 32 L14 26 V14 Z" />
          <circle cx="24" cy="20" r="3.5" />
        </Svg>
      </WallToolItem>
      <div className="ml-[7px] w-[1px] h-[100px] bg-[#505050]" />
      <WallToolItem label="Wall" w="w-[80px]" className="ml-2" active>
        <Svg w={36} h={38} sw={2.8}>
          <rect x="2" y="2" width="32" height="34" rx="3" />
          <path d="M2 12 H34 M2 24 H34 M12 2 V12 M22 12 V24 M12 24 V36" />
        </Svg>
      </WallToolItem>
      <div className="absolute right-[10px] top-[14px] text-[#8c8c8c]">
        <Pin size={24} strokeWidth={2} className="rotate-[30deg]" />
      </div>
      <div className="absolute right-[6px] bottom-[4px] text-[#8c8c8c]">
        <Svg w={24} h={24} sw={2}>
          <path d="M8 2 V8 H2 M14 22 V14 H22" />
        </Svg>
      </div>
    </div>
  </div>
);

const WallPopover = () => (
  <div className="absolute left-[1728px] top-[510px] w-[384px] h-[284px] border-[5px] border-[#d8222c] bg-[#363636] font-['Liberation_Sans',Arial,sans-serif] text-2xl text-[#eeeeee]">
    <div className="h-[60px] border-b-2 border-[#4a4a4a] flex items-center justify-between pl-[25px] pr-[18px]">
      <span className="font-bold text-white">Wall</span>
      <Pin size={26} fill="#eeeeee" strokeWidth={2} className="rotate-45" />
    </div>
    <div className="mt-[32px] pl-[25px] flex items-start">
      <div className="w-[161px] leading-9">
        Wall
        <br />
        Thickness
      </div>
      <div className="mt-[12px] w-[158px] h-[47px] rounded-lg border-2 border-[#4e4e4e] flex items-center justify-between pl-3 pr-[11px]">
        <span>200mm</span>
        <div className="flex flex-col -space-y-[4px]">
          <ChevronUp size={20} strokeWidth={2} />
          <ChevronDown size={20} strokeWidth={2} />
        </div>
      </div>
    </div>
    <div className="mt-[41px] pl-[25px] flex items-center gap-[22px]">
      <div className="w-7 h-7 rounded-[4px] border-2 border-[#666666]" />
      <span>Apply to all walls</span>
    </div>
  </div>
);

export default function App() {
  return (
    <div className="w-[2560px] h-[1440px] relative overflow-hidden flex flex-col bg-[#1e1e1e] text-white font-['Noto_Sans',sans-serif]">
      <TopBar />
      <ToolBar />
      <main className="flex-1 flex min-h-0">
        <LeftRail />
        <SymbolPanel />
        <Canvas />
        <ThemePanel />
        <RightRail />
      </main>
      <BottomBar />
      <WallToolbar />
      <WallPopover />
    </div>
  );
}
